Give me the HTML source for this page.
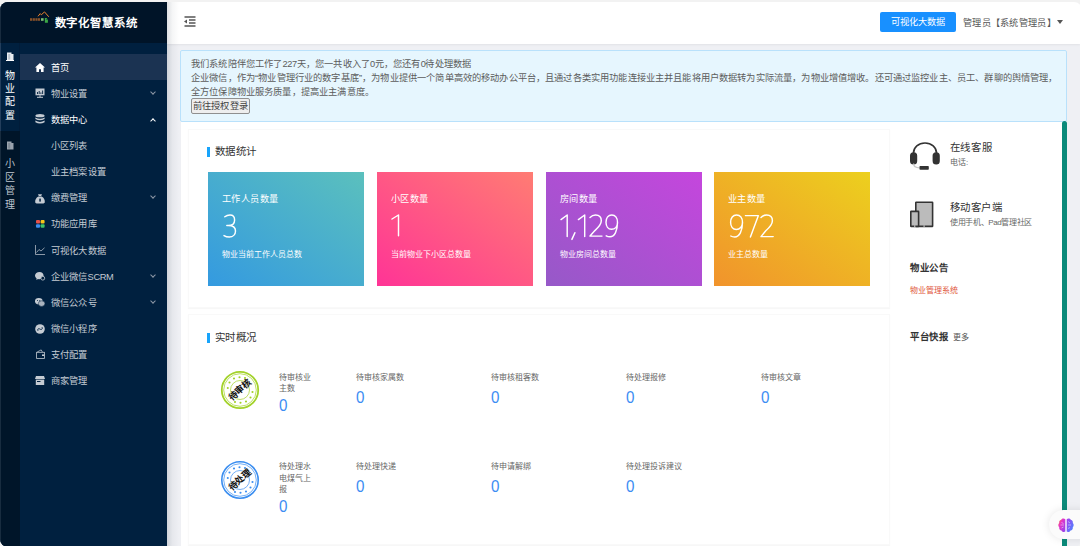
<!DOCTYPE html>
<html lang="zh-CN"><head><meta charset="utf-8">
<style>
*{margin:0;padding:0;box-sizing:border-box}
html,body{width:1080px;height:546px;overflow:hidden;background:#f2f2f2;font-family:"Liberation Sans",sans-serif}
#frame{position:absolute;left:0;top:2px;width:1082px;height:545px;border-radius:8px;overflow:hidden;background:#eff0f4}
#app{position:absolute;left:0;top:-2px;width:1080px;height:546px}
.abs{position:absolute}
svg{position:absolute;overflow:visible}
#side{left:0;top:0;width:167px;height:546px;background:#00203f}
#logo{left:0;top:0;width:167px;height:43px;background:#001428}
#strip{left:0;top:131px;width:20px;height:415px;background:#001529}
#tab1{left:0;top:43px;width:20px;height:88px;background:#00203f;border-right:1px solid #011c39;border-left:1px solid #0d2a4a}
.vt{position:absolute;left:0;width:20px;text-align:center;color:#fff;font-size:10px;line-height:13.2px}
.menu{position:absolute;left:20px;width:147px;height:26px;color:#c4cbd3;font-size:9.25px;line-height:26px;letter-spacing:0.15px}
.menu .t{position:absolute;left:31px;top:1.3px}
.menu.act{background:#1b3352;color:#fff}
.menu .chev{position:absolute;left:131px;top:10px;width:4px;height:4px;border-right:1px solid #8d98a6;border-bottom:1px solid #8d98a6;transform:rotate(45deg)}
.menu .chev.up{transform:rotate(-135deg);top:13px;border-color:#fff;border-width:1.5px}
#hdr{left:167px;top:0;width:913px;height:43.5px;background:#fff;box-shadow:0 1px 2px rgba(0,0,0,0.06)}
#shadow{left:167px;top:0;width:12px;height:546px;background:linear-gradient(to right,rgba(0,21,41,0.13),rgba(0,21,41,0.04) 45%,rgba(0,21,41,0))}
#alert{left:180px;top:50px;width:887px;height:72px;background:#e6f6fe;border:1px solid #b9e1fb;border-radius:2px;color:#5c5c5c;font-size:9.25px;line-height:13.8px;padding:7px 0 0 10px;font-weight:300;letter-spacing:0.15px}
#alert .d{letter-spacing:-0.35px}
#alert .btn{display:inline-block;border:1px solid #8f8f8f;background:#eeeeee;color:#444;height:16px;line-height:14px;padding:0 1px;border-radius:2px;font-size:9.25px;vertical-align:top;margin-top:-1px}
#main{left:181px;top:122px;width:881px;height:424px;background:#fff}
#sb{left:1062px;top:121px;width:5px;height:425px;background:#0b8a7a;border-radius:3px 3px 0 0}
.panel{position:absolute;background:#fff;border:1px solid #f9f9f9;box-shadow:0 1px 1px rgba(0,0,0,0.03)}
.title{position:absolute;font-size:10.5px;color:#333;line-height:12px;font-weight:300;letter-spacing:0.25px}
.title:before{content:"";position:absolute;left:-8.2px;top:2.4px;width:3.2px;height:9.4px;background:#18a4fb}
.card{position:absolute;top:172px;width:155.5px;height:113.7px;color:#fff}
.card .l1{position:absolute;left:14px;top:20.5px;font-size:9.2px;line-height:12px;letter-spacing:0.45px;font-weight:300}
.card .l2{position:absolute;left:14px;top:78px;font-size:8px;line-height:10px;font-weight:300}
.lbl{position:absolute;font-size:8px;color:#666;line-height:11.7px;font-weight:300}
.zero{position:absolute;font-size:16.5px;color:#3d8df3;line-height:16px;transform:scaleX(0.92);transform-origin:0 0}
.dg{fill:none;stroke:#fff;stroke-width:1.45;stroke-linecap:round;stroke-linejoin:round}
</style></head><body>
<div id="frame"><div id="app">
 <div id="side" class="abs"></div>
 <div id="logo" class="abs">
   <svg style="left:29px;top:11px" width="21" height="13" viewBox="0 0 21 13">
     <path d="M9,5.3 L11.2,2.6 L12.3,3.8 L15.5,0.9 L19.8,5.8" fill="none" stroke="#e8822e" stroke-width="1"/>
     <g fill="#e07b2c" opacity="0.6"><rect x="1" y="7.2" width="2.2" height="2.6"/><rect x="3.7" y="7.2" width="2.2" height="2.6"/><rect x="6.4" y="7.2" width="2.2" height="2.6"/><rect x="9" y="7.2" width="2" height="2.6"/></g>
     <rect x="12" y="7.2" width="2.6" height="2.6" fill="#8fd47a" opacity="0.9"/>
     <path d="M15.8,7 h2.6 l-1.3,1.6 h1.8 v3.2 h-3z" fill="#3aa846"/>
   </svg>
   <div class="abs" style="left:54.5px;top:15px;color:#fff;font-weight:bold;font-size:11.4px;letter-spacing:0.85px;line-height:16px">数字化智慧系统</div>
 </div>
 <div id="strip" class="abs"></div>
 <div id="tab1" class="abs"></div>
 <svg style="left:6px;top:52px" width="8" height="9" viewBox="0 0 8 9">
   <path d="M1,0.5 h4.5 v1.6 h2 v6 h-6.5z" fill="#e8ecf0"/><rect x="2.2" y="2" width="2" height="5.5" fill="#b9c2cc"/><rect x="0" y="8" width="8" height="1" fill="#fff"/>
 </svg>
 <div class="vt" style="top:69px">物<br>业<br>配<br>置</div>
 <svg style="left:6px;top:141px" width="8" height="9" viewBox="0 0 8 9">
   <path d="M1,0.5 h4.5 v1.6 h2 v6.5 h-6.5z" fill="#9aa3ad"/><rect x="2.2" y="2" width="2" height="5.5" fill="#7f8994"/>
 </svg>
 <div class="vt" style="top:157px;line-height:13.5px;color:#bfc6cf">小<br>区<br>管<br>理</div>

 <div class="menu act" style="top:54px"><span class="t">首页</span></div>
 <div class="menu" style="top:80px"><span class="t">物业设置</span><i class="chev"></i></div>
 <div class="menu" style="top:106px;color:#fff"><span class="t">数据中心</span><i class="chev up"></i></div>
 <div class="menu" style="top:132px"><span class="t">小区列表</span></div>
 <div class="menu" style="top:158px"><span class="t">业主档案设置</span></div>
 <div class="menu" style="top:184px"><span class="t">缴费管理</span><i class="chev"></i></div>
 <div class="menu" style="top:210px"><span class="t">功能应用库</span></div>
 <div class="menu" style="top:237px"><span class="t">可视化大数据</span></div>
 <div class="menu" style="top:263px"><span class="t">企业微信<span style="letter-spacing:-0.4px">SCRM</span></span><i class="chev"></i></div>
 <div class="menu" style="top:289px"><span class="t">微信公众号</span><i class="chev"></i></div>
 <div class="menu" style="top:315px"><span class="t">微信小程序</span></div>
 <div class="menu" style="top:341px"><span class="t">支付配置</span></div>
 <div class="menu" style="top:367px"><span class="t">商家管理</span></div>

 <!-- sidebar icons -->
 <svg style="left:35px;top:63px" width="10" height="9" viewBox="0 0 10 9"><path d="M5,0 L10,4.6 H8.6 V9 H6 V6.2 H4 V9 H1.4 V4.6 H0 Z" fill="#fff"/></svg>
 <svg style="left:35px;top:88px" width="10" height="10" viewBox="0 0 10 10"><rect x="0.5" y="0.5" width="9" height="6.8" fill="#c4cbd3"/><path d="M2.5,6 v-2 M4.2,6 v-3 M5.9,6 v-1.6 M7.6,6 v-3.5" stroke="#00203f" stroke-width="0.9"/><rect x="4.4" y="7.3" width="1.2" height="1.5" fill="#c4cbd3"/><rect x="2" y="8.8" width="6" height="1" fill="#c4cbd3"/></svg>
 <svg style="left:35px;top:114px" width="10" height="10" viewBox="0 0 10 10"><ellipse cx="5" cy="1.7" rx="4.6" ry="1.6" fill="#c4cbd3"/><path d="M0.4,3.4 Q5,6 9.6,3.4 V5 Q5,7.6 0.4,5z" fill="#c4cbd3"/><path d="M0.4,6.6 Q5,9.2 9.6,6.6 V8.2 Q5,10.8 0.4,8.2z" fill="#c4cbd3"/></svg>
 <svg style="left:35px;top:193.5px" width="10" height="9.5" viewBox="0 0 10 9.5"><path d="M3,0.2 h4 l-0.8,1.8 h-2.4z" fill="#c4cbd3"/><path d="M3.4,2.4 h3.2 C9,3.6 10,6 9.8,8 C9.7,9 9.2,9.4 8.4,9.4 H1.6 C0.8,9.4 0.3,9 0.2,8 C0,6 1,3.6 3.4,2.4z" fill="#c4cbd3"/><rect x="4.3" y="4.6" width="1.5" height="3" fill="#00203f"/></svg>
 <svg style="left:35.5px;top:219.8px" width="9" height="8" viewBox="0 0 9 8"><rect x="0" y="0" width="4" height="3.6" rx="1" fill="#e8524a"/><rect x="4.6" y="0" width="4" height="3.6" rx="1" fill="#f5c518"/><rect x="0" y="4.2" width="4" height="3.6" rx="1" fill="#3d8ff0"/><rect x="4.6" y="4.2" width="4" height="3.6" rx="1" fill="#3cc26a"/></svg>
 <svg style="left:35px;top:245px" width="10" height="10" viewBox="0 0 10 10"><path d="M0.5,0 V9.5 H10 M1.5,7.5 L4,4.5 L6,6 L9.5,2.8" fill="none" stroke="#aeb7c2" stroke-width="0.8"/></svg>
 <svg style="left:35px;top:272px" width="10" height="9" viewBox="0 0 10 9"><path d="M4.5,0 C7,0 8.6,1.6 8.6,3.6 C8.6,5.8 7,7.2 4.5,7.2 C4,7.2 3.4,7.1 3,7 L1.4,8 L1.6,6.4 C0.6,5.8 0,4.8 0,3.6 C0,1.6 2,0 4.5,0z" fill="#c4cbd3"/><circle cx="7.8" cy="6.2" r="1.9" fill="#00203f" stroke="#c4cbd3" stroke-width="0.8"/></svg>
 <svg style="left:35px;top:298px" width="10" height="9" viewBox="0 0 10 9"><ellipse cx="3.8" cy="3.2" rx="3.8" ry="3.1" fill="#c4cbd3"/><ellipse cx="6.6" cy="5.6" rx="3.3" ry="2.8" fill="#aab3be" stroke="#00203f" stroke-width="0.5"/><circle cx="2.5" cy="2.6" r="0.5" fill="#00203f"/><circle cx="4.8" cy="2.6" r="0.5" fill="#00203f"/></svg>
 <svg style="left:35px;top:324px" width="10" height="10" viewBox="0 0 10 10"><circle cx="5" cy="5" r="4.8" fill="#c4cbd3"/><path d="M3,6.8 C2,5.8 3.2,4.2 4.4,4.8 L5.6,5.4 C6.8,6 8,4.2 7,3.2" fill="none" stroke="#00203f" stroke-width="0.9"/></svg>
 <svg style="left:36px;top:349px" width="9" height="10" viewBox="0 0 9 10"><path d="M1.2,3 L5.2,0.9 L6.4,3" fill="none" stroke="#c4cbd3" stroke-width="0.75"/><rect x="0.6" y="3.3" width="7.8" height="6.1" fill="none" stroke="#c4cbd3" stroke-width="0.8"/><rect x="6" y="5.4" width="2.4" height="1.6" fill="#c4cbd3"/></svg>
 <svg style="left:35px;top:376px" width="10" height="9" viewBox="0 0 10 9"><path d="M1,0 H9 L10,3 H0z" fill="#c4cbd3"/><rect x="0.8" y="3.6" width="8.4" height="5.4" fill="#c4cbd3"/><rect x="2" y="5" width="3.5" height="1" fill="#00203f"/></svg>

 <div id="hdr" class="abs">
   <svg style="left:16.5px;top:16px" width="12" height="11" viewBox="0 0 12 11"><path d="M0.5,1 H11.5 M5,4 H11.5 M5,7 H11.5 M0.5,10 H11.5" stroke="#555" stroke-width="1.3"/><path d="M0,5.5 L3,3.6 V7.4z" fill="#555"/></svg>
   <div class="abs" style="left:713px;top:12px;width:76px;height:20px;background:#1890ff;border-radius:2px;color:#fff;font-size:9.2px;line-height:21px;text-align:center;letter-spacing:0.1px">可视化大数据</div>
   <div class="abs" style="left:796px;top:16px;color:#555;font-size:9.2px;line-height:14px;letter-spacing:0.3px">管理员【系统管理员】</div>
   <div class="abs" style="left:889.5px;top:20px;width:0;height:0;border-left:3.2px solid transparent;border-right:3.2px solid transparent;border-top:4.6px solid #555"></div>
 </div>
 <div id="shadow" class="abs"></div>
 <div id="alert" class="abs">我们系统陪伴您工作了<span class="d">227</span>天，您一共收入了<span class="d">0</span>元，您还有<span class="d">0</span>待处理数据<br>企业微信，作为“物业管理行业的数字基底”，为物业提供一个简单高效的移动办公平台，且通过各类实用功能连接业主并且能将用户数据转为实际流量，为物业增值增收。还可通过监控业主、员工、群聊的舆情管理，<br>全方位保障物业服务质量，提高业主满意度。<br><span class="btn">前往授权登录</span></div>
 <div id="main" class="abs"></div>
 <div id="sb" class="abs"></div>
 <div class="panel" style="left:188px;top:129px;width:702px;height:179px"></div>
 <div class="panel" style="left:188px;top:314px;width:702px;height:231px"></div>
 <div class="title" style="left:215px;top:145px">数据统计</div>
 <div class="title" style="left:215px;top:331px">实时概况</div>

 <div class="card" style="left:208px;background:linear-gradient(to top right,#349ae0,#5bc0bd)"><div class="l1">工作人员数量</div><div class="l2">物业当前工作人员总数</div></div>
 <div class="card" style="left:377px;background:linear-gradient(to top right,#ff3496,#ff7c73)"><div class="l1">小区数量</div><div class="l2">当前物业下小区总数量</div></div>
 <div class="card" style="left:546px;background:linear-gradient(to top right,#9659c8,#c546dd)"><div class="l1">房间数量</div><div class="l2">物业房间总数量</div></div>
 <div class="card" style="left:714px;background:linear-gradient(to top right,#f1932c,#ecd01e)"><div class="l1">业主数量</div><div class="l2">业主总数量</div></div>
 <!-- digits -->
 <svg style="left:223.8px;top:214.9px" width="12" height="22" class="dg"><path d="M0.8,1.8 C2.3,0.6 4,0 6,0 C8.8,0 10.6,1.9 10.6,4.9 C10.6,8.3 8.3,10.5 4.3,10.5 H2.8 M4.3,10.5 C9,10.5 11.5,12.6 11.5,15.9 C11.5,19.6 8.9,22 5.3,22 C3.2,22 1.5,21.5 0,20.6"/></svg>
 <svg style="left:392px;top:215.3px" width="8" height="21" class="dg"><path d="M0,4 L6.5,0 V20.8"/></svg>
 <svg style="left:560.9px;top:215px" width="58" height="25" class="dg"><path d="M0,4.6 L6.2,0 V21.5"/><path d="M13.9,17.8 L10.9,24.4" stroke-width="1.5"/><path d="M17.4,4.6 L23.7,0 V21.5"/><path d="M29,2.4 C30.6,0.8 32.5,0 34.5,0 C37.9,0 40.3,2.2 40.3,5.8 C40.3,9.5 37.9,12 33.9,15.6 L29,21.1 H41"/><path d="M56.5,7.5 C56.5,3 54.2,0 50.8,0 C47.3,0 45,3 45,7.3 C45,11.5 47.2,14.3 50.5,14.3 C54,14.3 56.5,11.5 56.5,7.5 C56.5,16 53.5,21.8 49,21.8 C47.5,21.8 46.2,21.4 45.2,20.8"/></svg>
 <svg style="left:729.8px;top:214.7px" width="44" height="23" class="dg"><path d="M12.5,7.5 C12.5,3 10.2,0 6.5,0 C3,0 0.6,3 0.6,7.3 C0.6,11.5 2.9,14.4 6.3,14.4 C9.9,14.4 12.5,11.5 12.5,7.5 C12.5,16 9.4,22 4.8,22 C3.2,22 1.8,21.6 0.8,21"/><path d="M15.4,0.6 H28.4 L20.4,22"/><path d="M31,2.4 C32.6,0.8 34.5,0 36.6,0 C40.1,0 42.4,2.2 42.4,5.8 C42.4,9.6 40,12.1 35.8,15.8 L31,21.6 H43.2"/></svg>

 <div class="lbl" style="left:279px;top:371.5px;width:36px">待审核业主数</div>
 <div class="zero" style="left:279px;top:397px">0</div>
 <div class="lbl" style="left:356px;top:371.5px">待审核家属数</div>
 <div class="zero" style="left:356px;top:389px">0</div>
 <div class="lbl" style="left:491px;top:371.5px">待审核租客数</div>
 <div class="zero" style="left:491px;top:389px">0</div>
 <div class="lbl" style="left:626px;top:371.5px">待处理报修</div>
 <div class="zero" style="left:626px;top:389px">0</div>
 <div class="lbl" style="left:761px;top:371.5px">待审核文章</div>
 <div class="zero" style="left:761px;top:389px">0</div>

 <div class="lbl" style="left:279px;top:461px;width:36px">待处理水电煤气上报</div>
 <div class="zero" style="left:279px;top:498px">0</div>
 <div class="lbl" style="left:356px;top:461px">待处理快递</div>
 <div class="zero" style="left:356px;top:478px">0</div>
 <div class="lbl" style="left:491px;top:461px">待申请解绑</div>
 <div class="zero" style="left:491px;top:478px">0</div>
 <div class="lbl" style="left:626px;top:461px">待处理投诉建议</div>
 <div class="zero" style="left:626px;top:478px">0</div>

 <!-- stamps -->
 <svg style="left:220px;top:369.7px" width="40" height="40" viewBox="0 0 40 40">
   <circle cx="20" cy="20" r="18.2" fill="none" stroke="#a3d22a" stroke-width="1.8"/>
   <circle cx="20" cy="20" r="16.3" fill="none" stroke="#a2d125" stroke-width="0.7"/>
   <circle cx="20" cy="20" r="9.5" fill="none" stroke="#a2d125" stroke-width="0.7"/>
   <g fill="#a2d125"><circle cx="14" cy="8.5" r="1.05"/><circle cx="19.5" cy="7.3" r="1.05"/><circle cx="25" cy="8" r="1.05"/><circle cx="9.5" cy="12.5" r="1.05"/><circle cx="7.8" cy="18" r="1.05"/><circle cx="32.5" cy="22" r="1.05"/><circle cx="30.5" cy="27.5" r="1.05"/><circle cx="26" cy="31.5" r="1.05"/><circle cx="20.5" cy="32.7" r="1.05"/><circle cx="15" cy="32" r="1.05"/></g>
   <text x="20" y="23" text-anchor="middle" transform="rotate(-40 20 20)" font-family="Liberation Serif" font-weight="600" font-size="9" fill="#111">待审核</text>
 </svg>
 <svg style="left:220px;top:459.5px" width="40" height="40" viewBox="0 0 40 40">
   <circle cx="20" cy="20" r="18.2" fill="none" stroke="#3b8ef0" stroke-width="1.6"/>
   <circle cx="20" cy="20" r="16.3" fill="none" stroke="#3b8ef0" stroke-width="0.7"/>
   <circle cx="20" cy="20" r="9.5" fill="none" stroke="#3b8ef0" stroke-width="0.7"/>
   <g fill="#3b8ef0"><circle cx="14" cy="8.5" r="1.05"/><circle cx="19.5" cy="7.3" r="1.05"/><circle cx="25" cy="8" r="1.05"/><circle cx="9.5" cy="12.5" r="1.05"/><circle cx="7.8" cy="18" r="1.05"/><circle cx="32.5" cy="22" r="1.05"/><circle cx="30.5" cy="27.5" r="1.05"/><circle cx="26" cy="31.5" r="1.05"/><circle cx="20.5" cy="32.7" r="1.05"/><circle cx="15" cy="32" r="1.05"/></g>
   <text x="20" y="23" text-anchor="middle" transform="rotate(-40 20 20)" font-family="Liberation Serif" font-weight="600" font-size="9" fill="#111">待处理</text>
 </svg>

 <!-- right column -->
 <svg style="left:910px;top:142px" width="30" height="28" viewBox="0 0 30 28">
   <path d="M3.5,13 V11 C3.5,5.5 8.5,1 15,1 C21.5,1 26.5,5.5 26.5,11 V13" fill="none" stroke="#333" stroke-width="1.6"/>
   <rect x="0" y="10.2" width="7.2" height="12.2" rx="3.5" fill="#333"/>
   <rect x="22.6" y="10.2" width="7.2" height="12.2" rx="3.5" fill="#333"/>
   <path d="M3.6,21.5 C3.6,24.5 5,25.8 9.5,25.8" fill="none" stroke="#c8c8c8" stroke-width="1.2"/>
   <rect x="9.5" y="24" width="9.3" height="3.8" rx="0.8" fill="#333"/>
 </svg>
 <div class="abs" style="left:949.5px;top:141px;font-size:10.4px;letter-spacing:0.7px;color:#333;line-height:14px;font-weight:300">在线客服</div>
 <div class="abs" style="left:950px;top:158px;font-size:8px;color:#666;line-height:10px;font-weight:300">电话:</div>
 <svg style="left:910px;top:201px" width="24" height="26" viewBox="0 0 24 26">
   <rect x="5.8" y="1.2" width="16.8" height="24.2" rx="0.4" fill="#bbb" stroke="#333" stroke-width="1.6"/>
   <rect x="0.8" y="10.4" width="7.8" height="15" rx="0.4" fill="#bbb" stroke="#333" stroke-width="1.6"/><rect x="13.4" y="24.6" width="1.4" height="1" fill="#eee"/><rect x="4" y="24.6" width="1.4" height="1" fill="#eee"/>
 </svg>
 <div class="abs" style="left:949.5px;top:201px;font-size:10.4px;letter-spacing:0.6px;color:#333;line-height:14px;font-weight:300">移动客户端</div>
 <div class="abs" style="left:950px;top:217.5px;font-size:8px;letter-spacing:-0.35px;color:#666;line-height:10px;font-weight:300">使用手机、Pad管理社区</div>
 <div class="abs" style="left:910px;top:261px;font-size:9.4px;letter-spacing:0.6px;color:#333;font-weight:bold;line-height:14px">物业公告</div>
 <div class="abs" style="left:910px;top:285.5px;font-size:8px;color:#e0553a;line-height:10px;font-weight:300">物业管理系统</div>
 <div class="abs" style="left:910px;top:330px;font-size:9.4px;letter-spacing:0.6px;color:#333;font-weight:bold;line-height:14px">平台快报</div>
 <div class="abs" style="left:953px;top:332.5px;font-size:8px;color:#555;line-height:10px;font-weight:300">更多</div>

 <div class="abs" style="left:1049px;top:510px;width:45px;height:29px;border-radius:15px;background:#fbfbfb;box-shadow:0 0 8px rgba(0,0,0,0.1)"></div>
 <svg style="left:1058px;top:517.5px" width="16" height="15" viewBox="0 0 16 15">
   <defs><linearGradient id="bg1" x1="0" y1="0" x2="1" y2="1"><stop offset="0" stop-color="#ff8a2a"/><stop offset="0.35" stop-color="#e535c8"/><stop offset="1" stop-color="#8b45f0"/></linearGradient>
   <linearGradient id="bg2" x1="0" y1="0" x2="1" y2="1"><stop offset="0" stop-color="#a83ff0"/><stop offset="1" stop-color="#3f8dff"/></linearGradient></defs>
   <path d="M7.3,1.2 C6,0.2 4,0.4 3.2,1.8 C1.6,2 0.8,3.6 1.2,5 C0,6 0,8.2 1.2,9.2 C0.9,10.8 2,12.4 3.5,12.5 C4.2,14 6.2,14.6 7.3,13.6z" fill="url(#bg1)"/>
   <path d="M8.7,1.2 C10,0.2 12,0.4 12.8,1.8 C14.4,2 15.2,3.6 14.8,5 C16,6 16,8.2 14.8,9.2 C15.1,10.8 14,12.4 12.5,12.5 C11.8,14 9.8,14.6 8.7,13.6z" fill="url(#bg2)"/>
   <path d="M2.5,7 H6 M3.5,4.5 L5.5,5.5 M3.5,10 L5.5,9 M10,3.5 L12,5 M10,7 H13 M10,10.5 L12,9.5" stroke="#fff" stroke-width="0.6" fill="none" opacity="0.8"/>
 </svg>
 <div class="abs" style="left:0;top:0;width:1px;height:546px;background:rgba(200,210,220,0.12)"></div>
</div></div>
</body></html>
